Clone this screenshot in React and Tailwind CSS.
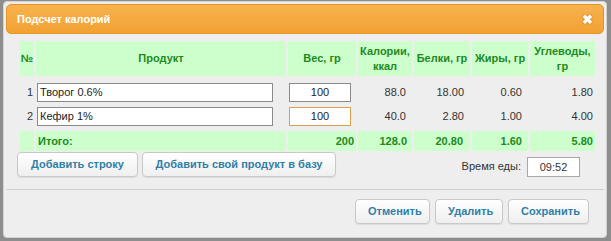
import React from 'react';

const rows = [
  { n: 1, name: 'Творог 0.6%', w: '100', kcal: '88.0', p: '18.00', f: '0.60', c: '1.80' },
  { n: 2, name: 'Кефир 1%', w: '100', kcal: '40.0', p: '2.80', f: '1.00', c: '4.00', active: true },
];

const btn =
  'h-[25px] px-3 rounded-[4px] border border-[#c9c9c9] bg-gradient-to-b from-white to-[#efefef] text-[#2f7fa6] font-bold text-[11px] shadow-[0_1px_1px_rgba(0,0,0,0.08)]';

const th = 'bg-[#ccffcc] text-[#1e8a1e] font-bold text-[11px] leading-[15px] text-center p-0';

export default function App() {
  return (
    <div
      className="w-[611px] h-[241px] bg-[#8d8d8d] pl-[3px] pr-[4px] pt-[1px] pb-[3px]"
      style={{ fontFamily: '"Liberation Sans", Arial, sans-serif' }}
    >
      <div className="h-full bg-[#eeeeee] rounded-[4px] border border-[#d4d4d4] flex flex-col pt-[2px] px-[2px]">
        {/* Title bar */}
        <div className="h-[30px] rounded-[5px] bg-gradient-to-b from-[#f7b24d] to-[#f2a232] border border-[#e39526] flex items-center justify-between pl-[10px] pr-[10px] shrink-0">
          <span className="text-white font-bold text-[11px]">Подсчет калорий</span>
          <span className="text-white font-bold text-[13px] leading-none drop-shadow-[0_0_1px_rgba(150,90,0,0.6)]">✖</span>
        </div>

        <div className="pl-[14px] pr-[12px] pt-[7px]">
          <table className="border-separate border-spacing-x-[2px] border-spacing-y-0 w-[579px] -ml-[2px]">
            <colgroup>
              <col className="w-[14px]" />
              <col className="w-[250px]" />
              <col className="w-[68px]" />
              <col className="w-[54px]" />
              <col className="w-[56px]" />
              <col className="w-[56px]" />
              <col className="w-[65px]" />
            </colgroup>
            <thead>
              <tr className="h-[35px]">
                <th className={th}>№</th>
                <th className={th}>Продукт</th>
                <th className={th}>Вес, гр</th>
                <th className={th}>Калории,<br />ккал</th>
                <th className={th}>Белки, гр</th>
                <th className={th}>Жиры, гр</th>
                <th className={th}>Углеводы,<br />гр</th>
              </tr>
            </thead>
            <tbody className="text-[11px] text-[#333]">
              <tr className="h-[4px]"><td colSpan={7} /></tr>
              {rows.map((r) => (
                <tr key={r.n} className="h-[24px]">
                  <td className="text-right pr-[1px]">{r.n}</td>
                  <td className="pl-[1px]">
                    <input
                      readOnly
                      value={r.name}
                      className="w-[236px] h-[19px] border border-[#8a8a8a] bg-white px-[2px] text-[11px] text-[#222] outline-none"
                    />
                  </td>
                  <td className="pl-[1px]">
                    <input
                      readOnly
                      value={r.w}
                      className={`w-[62px] h-[19px] bg-white text-center text-[11px] text-[#222] outline-none border ${
                        r.active ? 'border-[#d9a24a]' : 'border-[#8a8a8a]'
                      }`}
                    />
                  </td>
                  <td className="text-right pr-[6px]">{r.kcal}</td>
                  <td className="text-right pr-[6px]">{r.p}</td>
                  <td className="text-right pr-[6px]">{r.f}</td>
                  <td className="text-right pr-[2px]">{r.c}</td>
                </tr>
              ))}
              <tr className="h-[3px]"><td colSpan={7} /></tr>
              <tr className="h-[20px] text-[#1e8a1e] font-bold text-[11px]">
                <td className="bg-[#ccffcc]" />
                <td className="bg-[#ccffcc] pl-[2px]">Итого:</td>
                <td className="bg-[#ccffcc] text-right pr-[2px]">200</td>
                <td className="bg-[#ccffcc] text-right pr-[5px]">128.0</td>
                <td className="bg-[#ccffcc] text-right pr-[7px]">20.80</td>
                <td className="bg-[#ccffcc] text-right pr-[6px]">1.60</td>
                <td className="bg-[#ccffcc] text-right pr-[2px]">5.80</td>
              </tr>
            </tbody>
          </table>

          <div className="flex items-center mt-[1px] -ml-[3px]">
            <button className={`${btn} w-[121px]`}>Добавить строку</button>
            <button className={`${btn} w-[194px] ml-[4px]`}>Добавить свой продукт в базу</button>
            <span className="ml-auto text-[11px] text-[#333] mr-[6px] mt-[4px]">Время еды:</span>
            <input
              readOnly
              value="09:52"
              className="w-[53px] h-[20px] mt-[4px] mr-[12px] border border-[#a8a8a8] bg-white text-center text-[11px] text-[#333] outline-none"
            />
          </div>
        </div>

        <div className="mt-[12px] border-t border-[#d0d0d0] h-0" />

        <div className="flex justify-end gap-[5px] pr-[15px] mt-[9px]">
          <button className={`${btn} w-[75px]`}>Отменить</button>
          <button className={`${btn} w-[68px]`}>Удалить</button>
          <button className={`${btn} w-[81px]`}>Сохранить</button>
        </div>
      </div>
    </div>
  );
}
